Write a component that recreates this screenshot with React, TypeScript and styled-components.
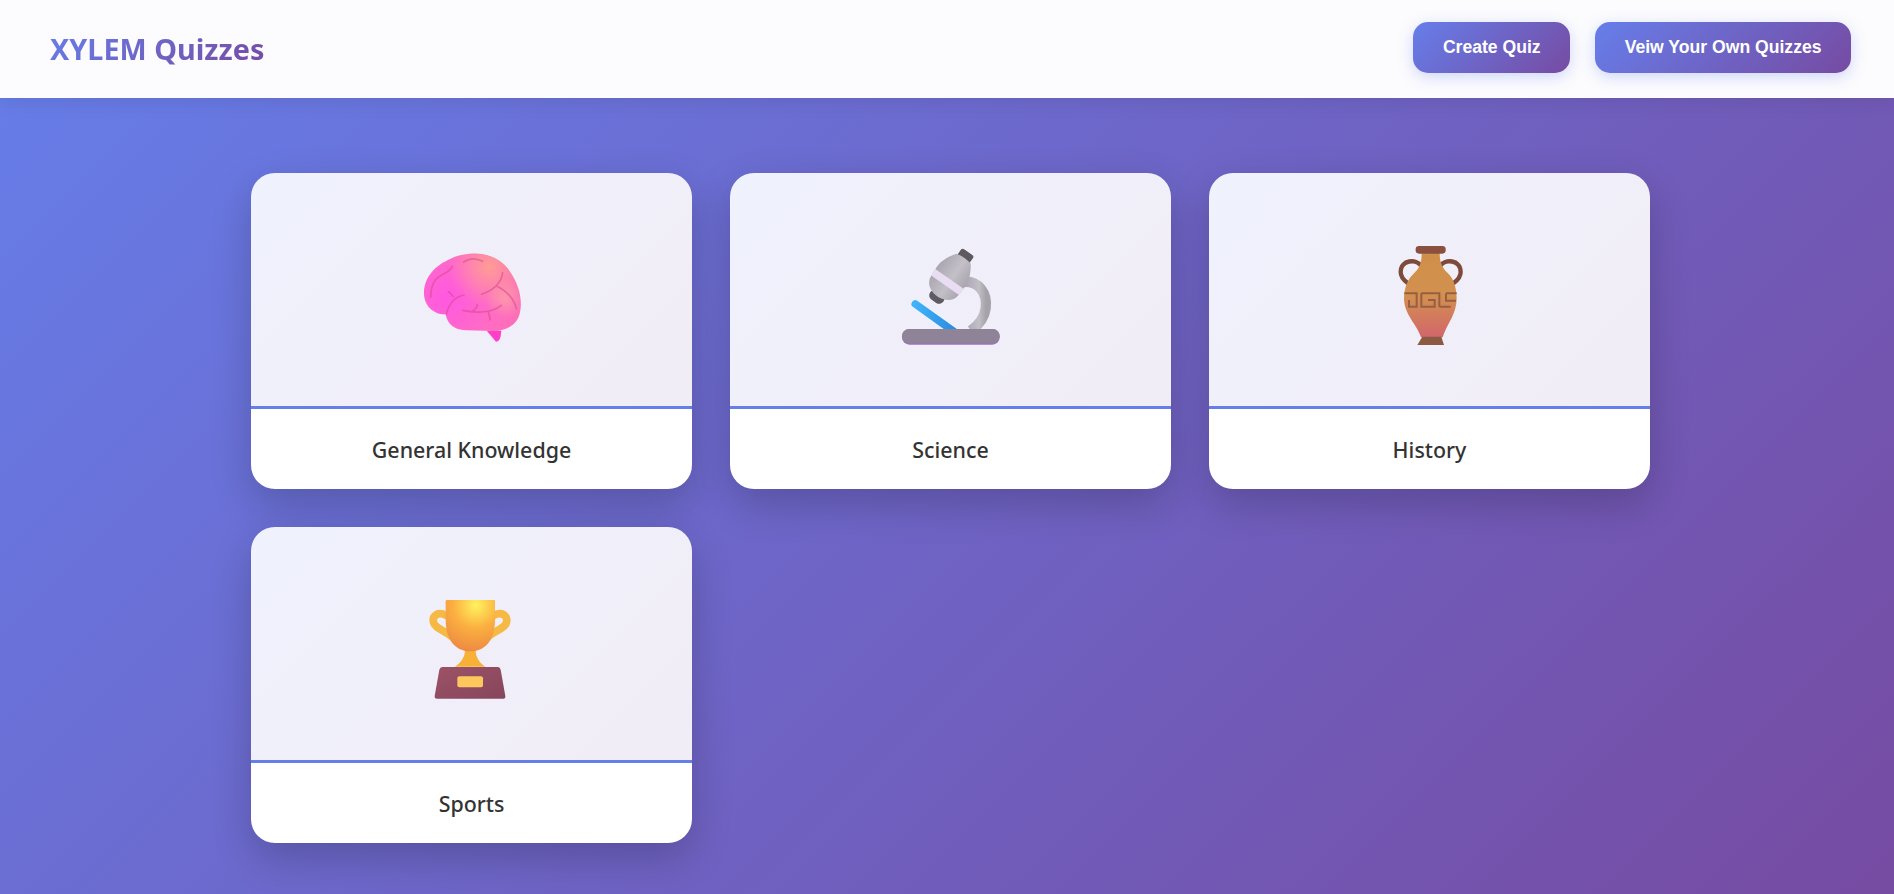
import styled, { createGlobalStyle } from 'styled-components'
import type { ReactNode } from 'react'

const GlobalStyle = createGlobalStyle`
  html, body {
    margin: 0;
    padding: 0;
    height: 100%;
  }
  body {
    font-family: 'Noto Sans', 'Open Sans', sans-serif;
    overflow: hidden;
  }
`

const Page = styled.div`
  height: 894px;
  background: linear-gradient(135deg, #667eea 0%, #764ba2 100%);
`

const Header = styled.header`
  height: 98px;
  box-sizing: border-box;
  display: flex;
  align-items: center;
  justify-content: space-between;
  padding: 0 43px 3px 50px;
  background: rgba(255, 255, 255, 0.98);
  box-shadow: 0 2px 20px rgba(0, 0, 0, 0.1);
`

const Logo = styled.h1`
  margin: 1px 0 0;
  font-size: 28.8px;
  font-weight: 700;
  background: linear-gradient(135deg, #667eea, #764ba2);
  -webkit-background-clip: text;
  background-clip: text;
  color: transparent;
`

const Actions = styled.nav`
  display: flex;
  gap: 25px;
`

const ActionButton = styled.button`
  height: 51px;
  padding: 0 29.5px;
  border: none;
  border-radius: 15px;
  background: linear-gradient(135deg, #667eea, #764ba2);
  box-shadow: 0 4px 15px rgba(102, 126, 234, 0.3);
  color: #fff;
  font-family: 'Liberation Sans', Arial, sans-serif;
  font-size: 17.6px;
  font-weight: 700;
  cursor: pointer;
`

const Grid = styled.main`
  display: grid;
  grid-template-columns: repeat(3, 441px);
  gap: 38px;
  padding: 75px 244px 0 251px;
`

const Card = styled.article`
  height: 316px;
  display: flex;
  flex-direction: column;
  border-radius: 24px;
  overflow: hidden;
  background: #fff;
  box-shadow: 0 15px 40px rgba(0, 0, 0, 0.2);
`

const Thumb = styled.div`
  height: 233px;
  flex: none;
  display: flex;
  align-items: center;
  justify-content: center;
  border-bottom: 3px solid #667eea;
  background: linear-gradient(135deg, rgba(102, 126, 234, 0.1), rgba(118, 75, 162, 0.1));
`

const Label = styled.h3`
  flex: 1;
  margin: 0;
  display: flex;
  align-items: center;
  justify-content: center;
  font-size: 21.4px;
  font-weight: 500;
  color: #333;
`

function BrainIcon() {
  const outline =
    'M70 190C70 140 105 105 150 86C205 60 290 62 330 128C355 165 368 212 356 255C346 286 316 303 280 303L195 301C160 300 140 282 135 253C100 255 70 228 70 190Z'
  return (
    <svg width="140" height="120" viewBox="4 0 420 360" aria-hidden="true">
      <defs>
        <radialGradient id="brainBase" gradientUnits="userSpaceOnUse" cx="135" cy="205" r="240">
          <stop offset="0" stopColor="#ff58e2" />
          <stop offset="0.6" stopColor="#ff6cc4" />
          <stop offset="1" stopColor="#fc6fb4" />
        </radialGradient>
        <radialGradient id="brainGlow" gradientUnits="userSpaceOnUse" cx="265" cy="110" r="120">
          <stop offset="0" stopColor="#ffa48e" stopOpacity="0.85" />
          <stop offset="1" stopColor="#ffa48e" stopOpacity="0" />
        </radialGradient>
        <radialGradient id="brainSide" gradientUnits="userSpaceOnUse" cx="315" cy="205" r="60">
          <stop offset="0" stopColor="#ffa0a8" stopOpacity="0.8" />
          <stop offset="1" stopColor="#ffa0a8" stopOpacity="0" />
        </radialGradient>
        <filter id="softCrease" x="-10%" y="-10%" width="120%" height="120%">
          <feGaussianBlur stdDeviation="2" />
        </filter>
      </defs>
      <path d="M258 302L302 302Q300 336 286 335Z" fill="#ff3fc8" />
      <path d={outline} fill="url(#brainBase)" />
      <path d={outline} fill="url(#brainGlow)" />
      <path d={outline} fill="url(#brainSide)" />
      <g fill="none" stroke="#d8468e" strokeWidth="5" strokeLinecap="round" opacity="0.55" filter="url(#softCrease)">
        <path d="M189 96Q215 78 246 94" />
        <path d="M155 108C155 125 120 130 104 150C94 164 90 185 90 202" />
        <path d="M143 185Q152 190 158 200" />
        <path d="M190 195C165 200 145 220 137 252" />
        <path d="M306 128C302 160 280 180 243 193" />
        <path d="M288 168C315 182 340 205 347 236" />
        <path d="M187 241C215 248 270 252 302 226" />
        <path d="M230 224C228 235 222 240 215 244" />
        <path d="M263 248Q268 258 268 270" />
      </g>
    </svg>
  )
}

function MicroscopeIcon() {
  return (
    <svg width="140" height="120" viewBox="2 0 420 360" aria-hidden="true">
      <defs>
        <linearGradient id="scopeBody" x1="0" y1="0" x2="1" y2="0">
          <stop offset="0" stopColor="#aaa5af" />
          <stop offset="0.55" stopColor="#c4c0c8" />
          <stop offset="1" stopColor="#aaa5ae" />
        </linearGradient>
        <linearGradient id="scopeArm" x1="0" y1="0" x2="1" y2="0">
          <stop offset="0" stopColor="#a79fb3" />
          <stop offset="0.7" stopColor="#c2bfc6" />
          <stop offset="1" stopColor="#a6a2a9" />
        </linearGradient>
        <linearGradient id="scopeSlide" x1="0" y1="0" x2="1" y2="0">
          <stop offset="0" stopColor="#3fb2f8" />
          <stop offset="1" stopColor="#2b8be0" />
        </linearGradient>
      </defs>
      <path d="M105 222L225 308" stroke="url(#scopeSlide)" strokeWidth="23" strokeLinecap="round" fill="none" />
      <path d="M246 156C295 150 322 190 316 235C312 265 295 285 272 302" stroke="url(#scopeArm)" strokeWidth="31" fill="none" />
      <rect x="65" y="297" width="293" height="47" rx="22" fill="#9a72bd" />
      <rect x="65" y="297" width="293" height="43" rx="21" fill="#8f8497" />
      <g transform="translate(212 140) rotate(35)">
        <rect x="-22" y="-90" width="44" height="32" rx="7" fill="#5d595f" />
        <rect x="-24" y="58" width="48" height="32" rx="15" fill="#5f5a63" />
        <path d="M-26 -66C-38 -50 -52 -25 -52 0L-50 34C-48 55 -30 72 0 72C30 72 48 55 50 34L52 0C52 -25 38 -50 26 -66Q0 -72 -26 -66Z" fill="url(#scopeBody)" />
        <path d="M-52 8H52L51 31H-51Z" fill="#e8ddf2" />
      </g>
    </svg>
  )
}

function AmphoraIcon() {
  return (
    <svg width="120" height="120" viewBox="-2 0 360 360" aria-hidden="true">
      <defs>
        <linearGradient id="vaseBody" x1="0" y1="0" x2="0" y2="1">
          <stop offset="0" stopColor="#cf8f48" />
          <stop offset="0.5" stopColor="#d39050" />
          <stop offset="1" stopColor="#d2666a" />
        </linearGradient>
      </defs>
      <g fill="none" stroke="#7e4a3c" strokeWidth="13" strokeLinecap="round">
        <path d="M152 108C138 86 90 88 90 126C90 140 99 150 110 158" />
        <path d="M208 108C222 86 270 88 270 126C270 140 261 150 250 158" />
      </g>
      <path
        d="M153 68L207 68C207 98 214 114 234 132C250 148 258 178 258 205C258 254 228 282 216 322L151 322C138 282 100 254 100 205C100 178 110 148 128 132C148 114 153 98 153 68Z"
        fill="url(#vaseBody)"
      />
      <path d="M155 320L212 320L220 345L140 345Z" fill="#8c5a42" />
      <rect x="135" y="48" width="90" height="23" rx="10" fill="#8a4f3e" />
      <path
        d="M101 190H138V230H115V210M152 190V230H192V210H172M152 190H206V230M226 190H258M226 190V212H256M206 230H240"
        fill="none"
        stroke="#95603f"
        strokeWidth="6"
      />
    </svg>
  )
}

function TrophyIcon() {
  return (
    <svg width="120" height="120" viewBox="6 -2 360 360" aria-hidden="true">
      <defs>
        <radialGradient id="cupFill" gradientUnits="userSpaceOnUse" cx="198" cy="62" r="170">
          <stop offset="0" stopColor="#fff25f" />
          <stop offset="0.4" stopColor="#fbb040" />
          <stop offset="0.8" stopColor="#ee8c42" />
          <stop offset="1" stopColor="#e07850" />
        </radialGradient>
        <linearGradient id="standFill" x1="0" y1="0" x2="1" y2="1">
          <stop offset="0" stopColor="#9c5266" />
          <stop offset="1" stopColor="#86465c" />
        </linearGradient>
      </defs>
      <g fill="none" stroke="#f6b945" strokeWidth="23" strokeLinecap="round">
        <path d="M108 92C85 80 67 92 70 111C73 131 100 135 126 156" />
        <path d="M252 92C275 80 293 92 290 111C287 131 260 135 234 156" />
      </g>
      <path d="M165 195H197C197 220 210 235 226 246H135C150 235 165 220 165 195Z" fill="#f6b136" />
      <path d="M107 50Q107 46 111 46H251Q255 46 255 50V105C255 170 222 200 181 200C140 200 107 170 107 105Z" fill="url(#cupFill)" />
      <path
        d="M97 247H264Q270 247 272 255L286 334Q287 342 280 342H81Q73 342 74 334L88 255Q90 247 97 247Z"
        fill="url(#standFill)"
      />
      <rect x="142" y="275" width="77" height="33" rx="6" fill="#fcc75c" />
    </svg>
  )
}

const CATEGORIES: { name: string; icon: ReactNode }[] = [
  { name: 'General Knowledge', icon: <BrainIcon /> },
  { name: 'Science', icon: <MicroscopeIcon /> },
  { name: 'History', icon: <AmphoraIcon /> },
  { name: 'Sports', icon: <TrophyIcon /> },
]

export default function App() {
  return (
    <Page>
      <GlobalStyle />
      <Header>
        <Logo>XYLEM Quizzes</Logo>
        <Actions>
          <ActionButton>Create Quiz</ActionButton>
          <ActionButton>Veiw Your Own Quizzes</ActionButton>
        </Actions>
      </Header>
      <Grid>
        {CATEGORIES.map(c => (
          <Card key={c.name}>
            <Thumb>{c.icon}</Thumb>
            <Label>{c.name}</Label>
          </Card>
        ))}
      </Grid>
    </Page>
  )
}
